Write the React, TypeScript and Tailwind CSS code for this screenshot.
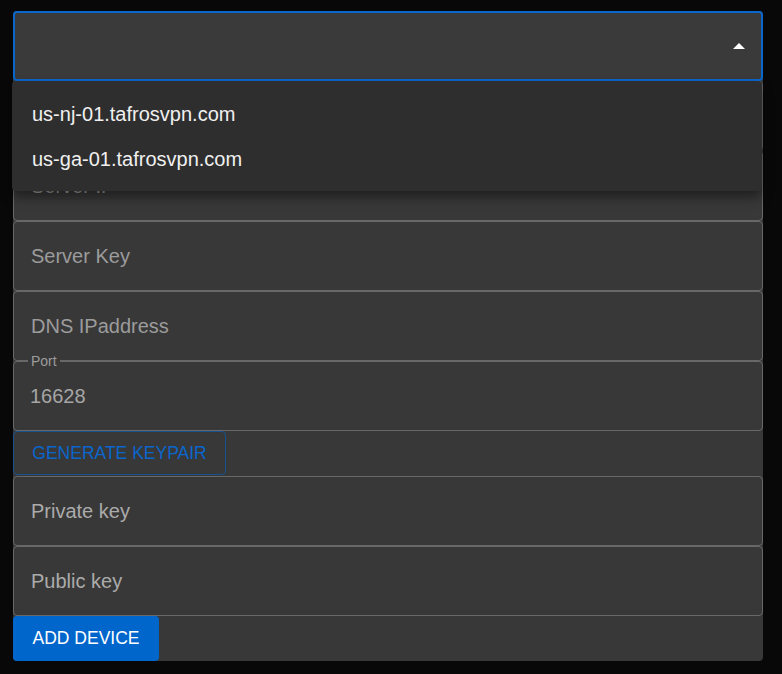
import React from "react";

const font = { fontFamily: '"Liberation Sans", Arial, sans-serif' };

function Field({ placeholder, className = "" }: { placeholder: string; className?: string }) {
  return (
    <div
      className={`h-[70px] w-full rounded-[4px] border border-[#686868] flex items-center pl-[17px] text-[20px] text-[#9c9c9c] ${className}`}
    >
      {placeholder}
    </div>
  );
}

export default function App() {
  return (
    <div className="min-h-screen w-full bg-[#080808] pt-[11px] pl-[13px]" style={font}>
      <div className="relative w-[750px] rounded-[4px] bg-[#383838] flex flex-col">
        {/* Select */}
        <div className="h-[70px] w-full rounded-[4px] border-2 border-[#0a66cc] bg-[#3a3a3a] flex items-center justify-end pr-[16px]">
          <svg width="12" height="6" viewBox="0 0 12 6">
            <polygon points="0,6 6,0 12,6" fill="#ffffff" />
          </svg>
        </div>
        <Field placeholder="" />
        <Field placeholder="Server IP" />
        <Field placeholder="Server Key" />
        <Field placeholder="DNS IPaddress" />
        {/* Port */}
        <div className="relative h-[70px] w-full rounded-[4px] border border-[#686868] flex items-center pl-[16px] text-[20px] text-[#a6a6a6]">
          16628
          <span className="absolute left-[14px] top-[-10px] px-[3px] bg-[#383838] text-[14px] leading-[18px] text-[#9c9c9c]">
            Port
          </span>
        </div>
        <div className="h-[45px] flex items-start">
          <button className="h-[44px] w-[213px] rounded-[4px] border border-[#17518f] text-[17.5px] text-[#0a66cc] flex items-center justify-center">
            GENERATE KEYPAIR
          </button>
        </div>
        <Field placeholder="Private key" className="text-[#ababab]" />
        <Field placeholder="Public key" className="text-[#ababab]" />
        <div className="h-[45px] flex">
          <button className="h-[45px] w-[146px] rounded-[4px] bg-[#0066cc] text-[17.5px] text-white flex items-center justify-center">
            ADD DEVICE
          </button>
        </div>

        {/* Dropdown menu */}
        <div className="absolute left-[-1px] top-[70px] w-[750px] h-[110px] rounded-[4px] bg-[#2e2e2e] pt-[10px] shadow-[0_6px_12px_rgba(0,0,0,0.45)]">
          <div className="h-[45px] flex items-center pl-[20px] text-[20px] text-[#f0f0f0]">us-nj-01.tafrosvpn.com</div>
          <div className="h-[45px] flex items-center pl-[20px] text-[20px] text-[#f0f0f0]">us-ga-01.tafrosvpn.com</div>
        </div>
      </div>
    </div>
  );
}
